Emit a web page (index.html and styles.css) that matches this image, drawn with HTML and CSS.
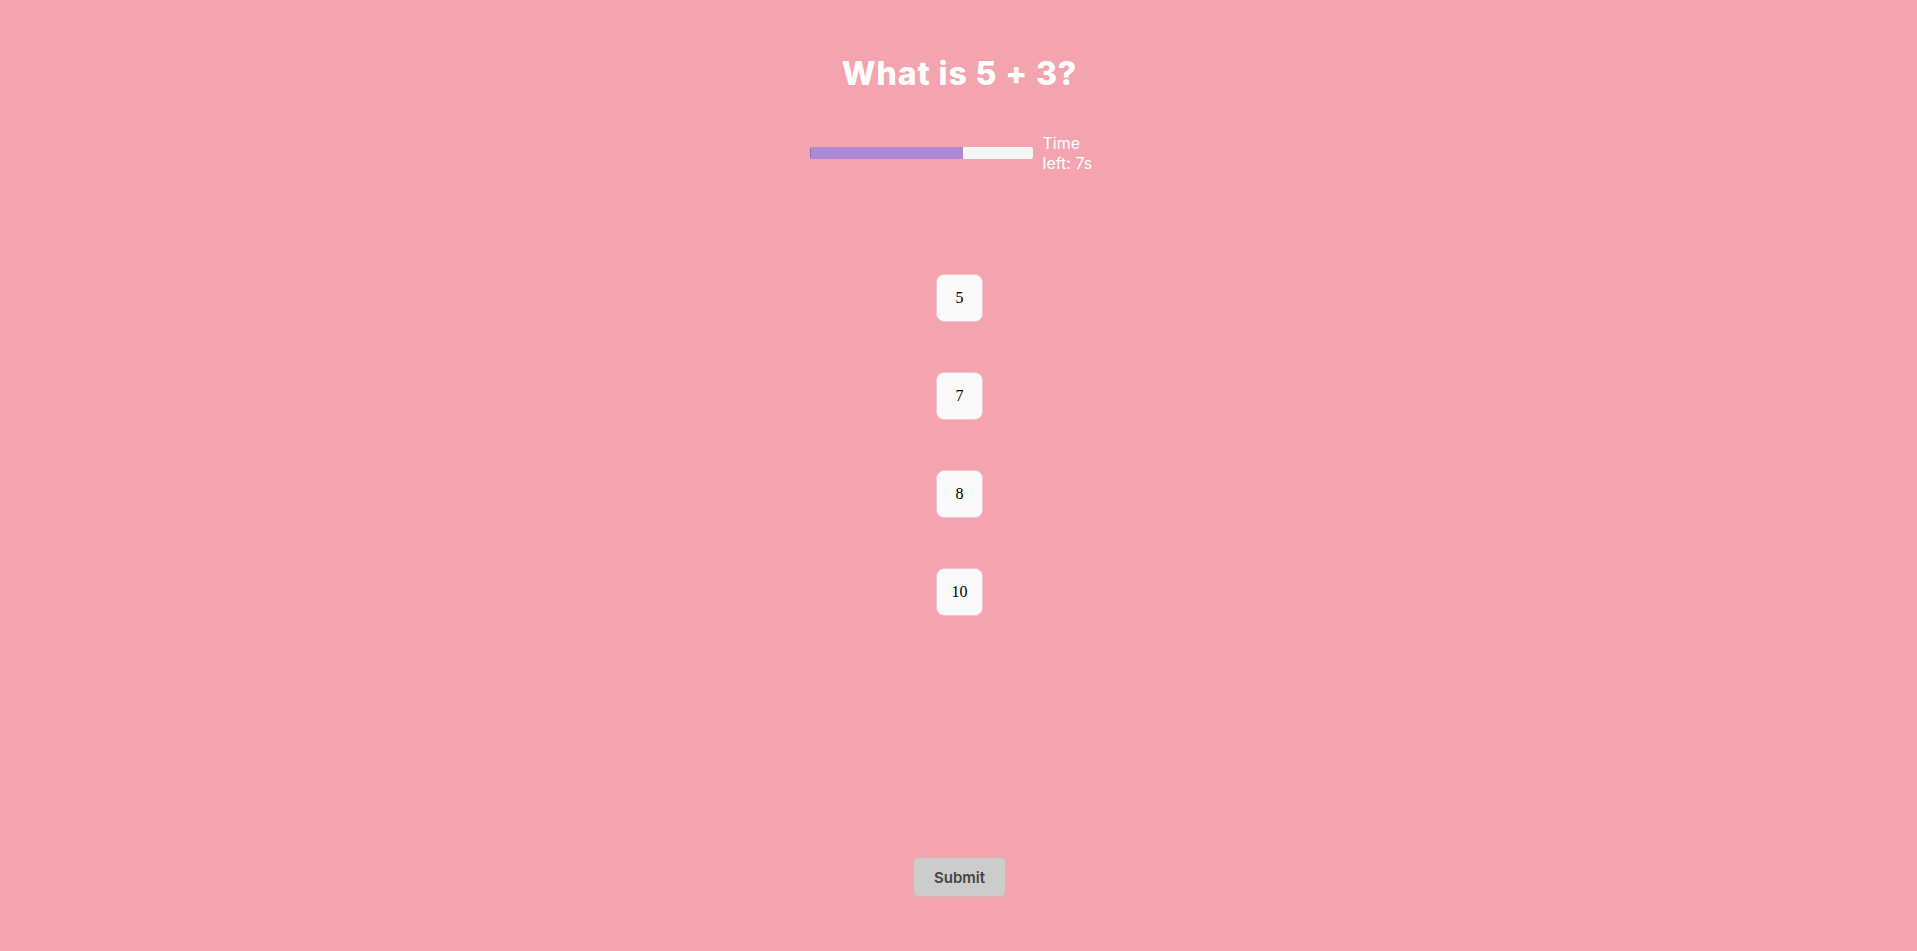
FILE: index.html
```html
<!DOCTYPE html>
<html lang="en">
<head>
<meta charset="utf-8">
<title>Quiz</title>
<link rel="stylesheet" href="styles.css">
</head>
<body>
<main class="quiz">
  <h1 class="question">What is 5 + 3?</h1>
  <div class="timer">
    <div class="timer-track"><div class="timer-fill" style="width:69%"></div></div>
    <div class="timer-text">Time left: 7s</div>
  </div>
  <div class="options">
    <button class="option">5</button>
    <button class="option">7</button>
    <button class="option">8</button>
    <button class="option">10</button>
  </div>
  <button class="submit">Submit</button>
</main>
</body>
</html>
```
FILE: styles.css
```css
html, body {
  margin: 0;
  padding: 0;
  background: #f4a4ae;
}
.quiz {
  display: flex;
  flex-direction: column;
  align-items: center;
  padding-top: 54px;
  padding-left: 2px;
}
.question {
  margin: 0;
  font-family: Inter, "Noto Sans", sans-serif;
  font-weight: 800;
  font-size: 32px;
  line-height: 39px;
  letter-spacing: 0.9px;
  color: #ffffff;
}
.timer {
  display: flex;
  align-items: center;
  width: 300px;
  margin-top: 40px;
}
.timer-track {
  width: 223px;
  height: 12px;
  flex: none;
  background: #f5f5f5;
  border-radius: 2px;
  overflow: hidden;
}
.timer-fill {
  height: 100%;
  background: #ae88d4;
  border-left: 1px solid #8a6cc0;
  box-sizing: border-box;
}
.timer-text {
  margin-left: 10px;
  width: 64px;
  font-family: Inter, "Noto Sans", sans-serif;
  font-size: 16px;
  line-height: 20px;
  color: #ffffff;
}
.options {
  display: flex;
  flex-direction: column;
  align-items: center;
  gap: 50px;
  margin-top: 101px;
}
.option {
  width: 47px;
  height: 48px;
  box-sizing: border-box;
  background: #f9f9f9;
  border: 1px solid #f0c4ca;
  border-radius: 8px;
  font-family: "Liberation Serif", serif;
  font-size: 16px;
  color: #000000;
  padding: 0;
}
.submit {
  margin-top: 241px;
  width: 93px;
  height: 40px;
  background: #cccccc;
  border: 1px solid #d8b0b6;
  border-radius: 5px;
  font-family: Inter, "Noto Sans", sans-serif;
  font-weight: 600;
  font-size: 15px;
  color: #444444;
}
```
